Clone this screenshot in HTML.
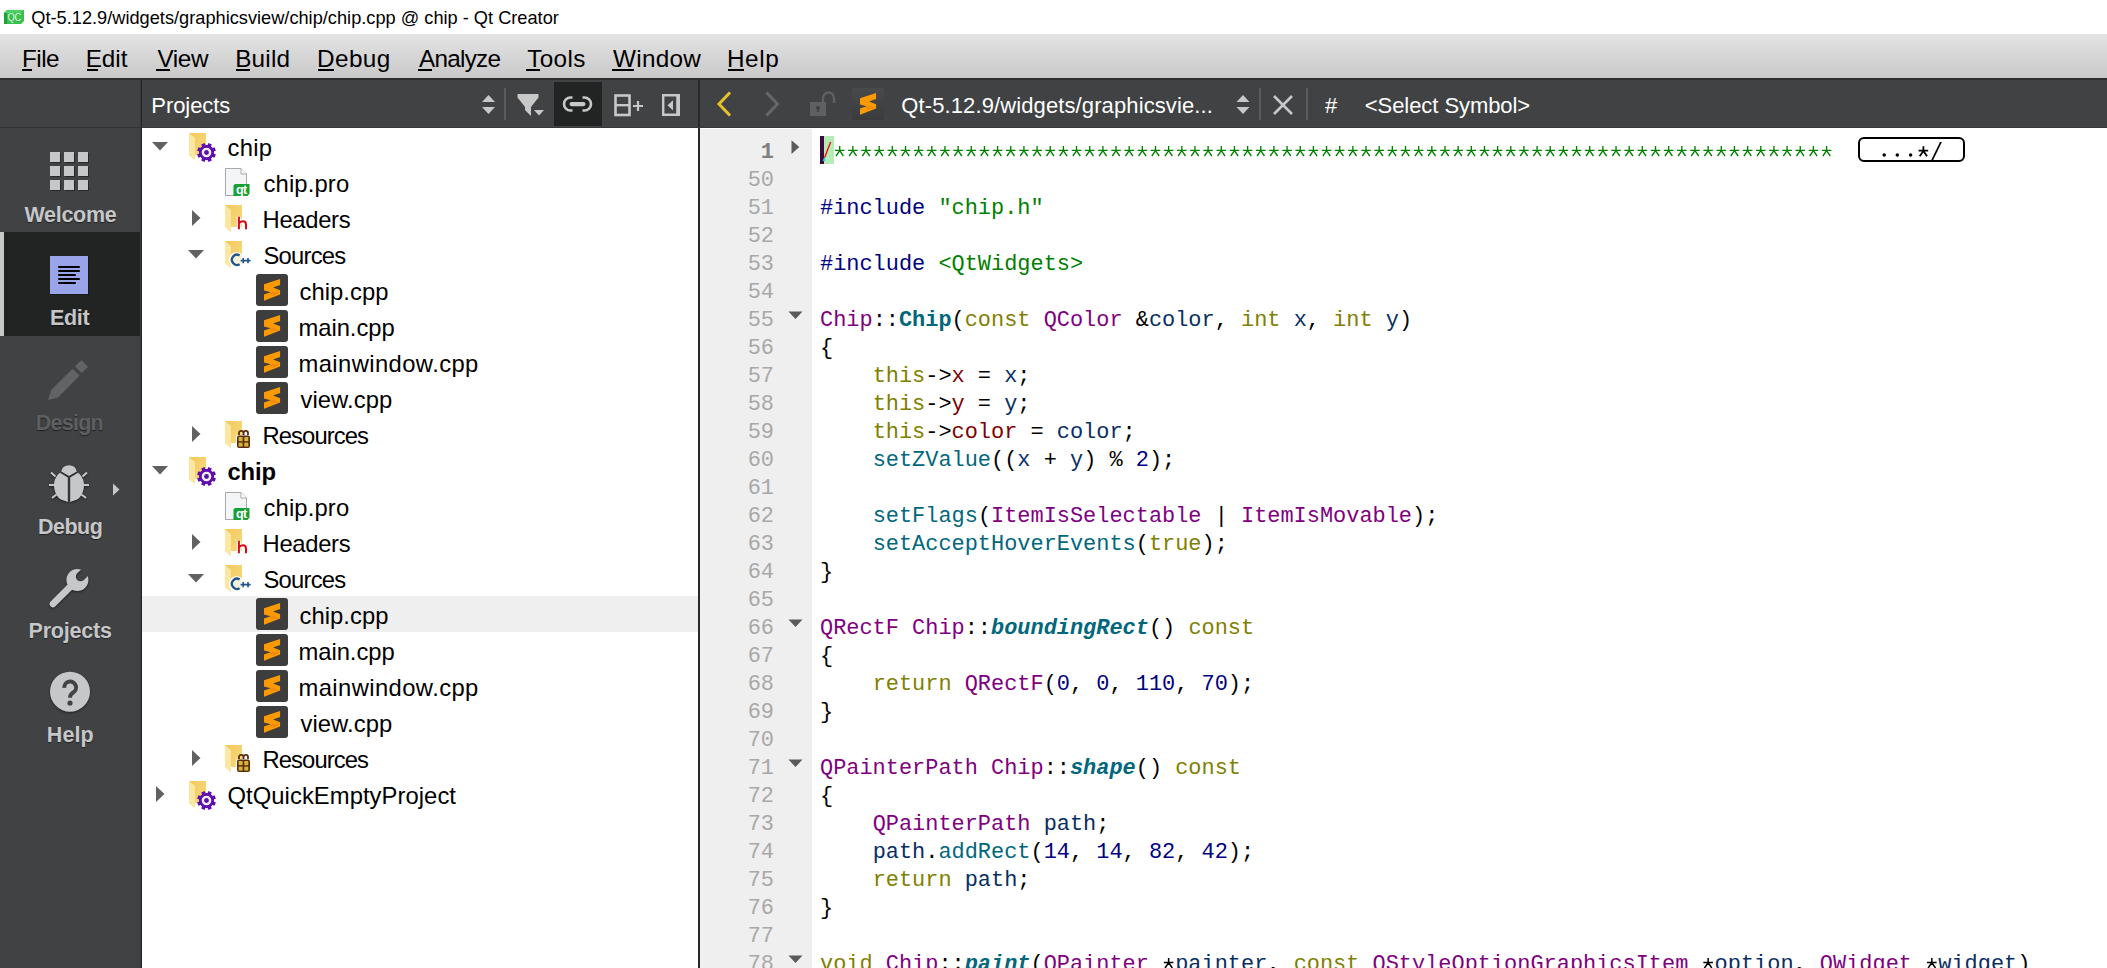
<!DOCTYPE html>
<html><head><meta charset="utf-8">
<style>
*{margin:0;padding:0;box-sizing:border-box}
html,body{width:2107px;height:968px;overflow:hidden;background:#fff;font-family:"Liberation Sans",sans-serif}
.a{position:absolute}
.t{position:absolute;white-space:pre;line-height:1}
svg{overflow:visible}
.sh{filter:drop-shadow(0.5px 1px 0.8px rgba(0,0,0,.55))}
</style></head>
<body>

<div class="a" style="left:0px;top:0px;width:2107px;height:34px;background:#fff;"></div>
<div class="a" style="left:0px;top:34px;width:2107px;height:44px;background:linear-gradient(#e3e3e3,#c9c9c9);"></div>
<div class="a" style="left:0px;top:78px;width:2107px;height:2px;background:#2d2e30;"></div>
<div class="a" style="left:0px;top:80px;width:2107px;height:48px;background:#404244;"></div>
<div class="a" style="left:0px;top:128px;width:140px;height:840px;background:#404244;"></div>
<div class="a" style="left:140px;top:128px;width:1px;height:840px;background:#37393b;"></div>
<div class="a" style="left:141px;top:128px;width:1px;height:840px;background:#232527;"></div>
<div class="a" style="left:142px;top:128px;width:556px;height:840px;background:#fff;"></div>
<div class="a" style="left:700px;top:129px;width:112px;height:839px;background:#efefef;"></div>
<div class="a" style="left:812px;top:128px;width:1295px;height:840px;background:#fff;"></div>
<div class="a" style="left:698px;top:80px;width:2px;height:888px;background:#29292a;"></div>
<div class="a" style="left:140px;top:80px;width:1px;height:48px;background:#37393b;"></div>
<div class="a" style="left:141px;top:80px;width:1px;height:48px;background:#232527;"></div>
<div class="a" style="left:0px;top:127px;width:140px;height:1px;background:#323234;"></div>
<div class="a" style="left:142px;top:127px;width:1965px;height:1px;background:#38393b;"></div>
<svg class="a " style="left:4px;top:10px" width="20" height="14" viewBox="0 0 20 14"><path d="M3 0H20V11L17 14H0V3Z" fill="#34c24a"/><path d="M0 3H3V14H0Z" fill="#22a236"/><path d="M0 3L3 0H20L17 3Z" fill="#4bd160"/><text x="12.8" y="11.4" font-family="Liberation Sans" font-size="11.6" fill="#e4f7e6" text-anchor="middle" transform="scale(0.8 1)" letter-spacing="-0.3">QC</text></svg>
<div class="t" style="left:31.299999999999997px;top:9.03px;font-size:18.2px;color:#000;font-weight:normal;font-style:normal;font-family:'Liberation Sans';letter-spacing:0.01px;">Qt-5.12.9/widgets/graphicsview/chip/chip.cpp @ chip - Qt Creator</div>
<div class="t" style="left:21.9px;top:47.25px;font-size:24.3px;color:#000;font-weight:normal;font-style:normal;font-family:'Liberation Sans';letter-spacing:-0.5px;">File</div>
<div class="t" style="left:85.7px;top:47.25px;font-size:24.3px;color:#000;font-weight:normal;font-style:normal;font-family:'Liberation Sans';letter-spacing:-0.033px;">Edit</div>
<div class="t" style="left:157.5px;top:47.25px;font-size:24.3px;color:#000;font-weight:normal;font-style:normal;font-family:'Liberation Sans';letter-spacing:-0.4px;">View</div>
<div class="t" style="left:235.2px;top:47.25px;font-size:24.3px;color:#000;font-weight:normal;font-style:normal;font-family:'Liberation Sans';letter-spacing:0.2px;">Build</div>
<div class="t" style="left:317px;top:47.25px;font-size:24.3px;color:#000;font-weight:normal;font-style:normal;font-family:'Liberation Sans';letter-spacing:0.425px;">Debug</div>
<div class="t" style="left:419px;top:47.25px;font-size:24.3px;color:#000;font-weight:normal;font-style:normal;font-family:'Liberation Sans';letter-spacing:-0.733px;">Analyze</div>
<div class="t" style="left:527.2px;top:47.25px;font-size:24.3px;color:#000;font-weight:normal;font-style:normal;font-family:'Liberation Sans';letter-spacing:0.375px;">Tools</div>
<div class="t" style="left:613px;top:47.25px;font-size:24.3px;color:#000;font-weight:normal;font-style:normal;font-family:'Liberation Sans';letter-spacing:0.28px;">Window</div>
<div class="t" style="left:727px;top:47.25px;font-size:24.3px;color:#000;font-weight:normal;font-style:normal;font-family:'Liberation Sans';letter-spacing:0.567px;">Help</div>
<div class="a" style="left:22px;top:69px;width:10.2px;height:2px;background:#000;"></div>
<div class="a" style="left:86.5px;top:69px;width:11.2px;height:2px;background:#000;"></div>
<div class="a" style="left:156.3px;top:69px;width:13.5px;height:2px;background:#000;"></div>
<div class="a" style="left:236px;top:69px;width:14px;height:2px;background:#000;"></div>
<div class="a" style="left:318px;top:69px;width:16px;height:2px;background:#000;"></div>
<div class="a" style="left:418px;top:69px;width:14.3px;height:2px;background:#000;"></div>
<div class="a" style="left:526.2px;top:69px;width:14px;height:2px;background:#000;"></div>
<div class="a" style="left:612px;top:69px;width:22px;height:2px;background:#000;"></div>
<div class="a" style="left:728px;top:69px;width:16px;height:2px;background:#000;"></div>
<div class="t" style="left:151.3px;top:95.00px;font-size:22.0px;color:#fff;font-weight:normal;font-style:normal;font-family:'Liberation Sans';letter-spacing:-0.071px;">Projects</div>
<svg class="a " style="left:481px;top:94px" width="15" height="21" viewBox="0 0 15 21"><path d="M7.5 1L14 8H1Z" fill="#c8c8c8"/><path d="M1 13H14L7.5 20Z" fill="#c8c8c8"/></svg>
<div class="a" style="left:504px;top:88px;width:2px;height:32px;background:#5b5c5e;"></div>
<svg class="a " style="left:517px;top:94px" width="28" height="23" viewBox="0 0 28 23"><path d="M0.5 0H21.5V3.5L14 13V22L8 16V13L0.5 3.5Z" fill="#c8c8c8"/><path d="M17 16H27L22 21.5Z" fill="#c8c8c8"/></svg>
<div class="a" style="left:554px;top:82px;width:48px;height:44px;background:#222424;"></div>
<svg class="a " style="left:563px;top:95px" width="30" height="18" viewBox="0 0 30 18"><path d="M9.5 2.5H7.5A6.5 6.5 0 0 0 7.5 15.5H9.5M19.5 2.5H21.5A6.5 6.5 0 0 1 21.5 15.5H19.5" stroke="#c8c8c8" stroke-width="2.6" fill="none"/><rect x="6.5" y="7" width="16" height="4.2" rx="2.1" fill="#c8c8c8"/></svg>
<svg class="a " style="left:614px;top:94px" width="30" height="23" viewBox="0 0 30 23"><rect x="1.5" y="1.5" width="14" height="19.5" stroke="#c8c8c8" stroke-width="2.6" fill="none"/><path d="M1.5 11.2H15.5" stroke="#c8c8c8" stroke-width="2.4"/><path d="M19 12H29M24 7V17" stroke="#c8c8c8" stroke-width="2.2"/></svg>
<svg class="a " style="left:662px;top:94px" width="20" height="23" viewBox="0 0 20 23"><path d="M0 0H18V22H0Z M2.4 2.4V19.6H14.2V2.4Z" fill="#c8c8c8" fill-rule="evenodd"/><path d="M11 6.2V16.5L5.5 11.3Z" fill="#c8c8c8"/></svg>
<svg class="a " style="left:716px;top:91px" width="17" height="27" viewBox="0 0 17 27"><path d="M14 1.5L3 13L14 24.5" stroke="#e6c228" stroke-width="3" fill="none"/></svg>
<svg class="a " style="left:764px;top:91px" width="17" height="27" viewBox="0 0 17 27"><path d="M2.5 1.5L13.5 13L2.5 24.5" stroke="#666769" stroke-width="3" fill="none"/></svg>
<svg class="a " style="left:809px;top:91px" width="27" height="26" viewBox="0 0 27 26"><rect x="1" y="11" width="16" height="14" fill="#5f6062"/><path d="M14 11.5V7A5.5 5.5 0 0 1 25 7V12" stroke="#5f6062" stroke-width="2.4" fill="none"/><circle cx="9" cy="17" r="2" fill="#404244"/><rect x="8" y="17" width="2" height="4" fill="#404244"/></svg>
<div class="a" style="left:852px;top:88px;width:32px;height:32px;background:linear-gradient(#484a4b,#3a3b3c);border-radius:3px"></div>
<svg class="a " style="left:852px;top:88px" width="32" height="32" viewBox="0 0 32 32"><path d="M8 10.3L24.1 5.1V11L17 13.6L24.1 16.2V20.4L8 26.8V20.4L14.6 18.2L8 16.6Z" fill="#fd9a02"/><path d="M12.5 19.2L17.5 17.4L22.5 19.8L17 21.8Z" fill="#e08508" opacity="0.55"/></svg>
<div class="t" style="left:901.3px;top:95.00px;font-size:22.0px;color:#fff;font-weight:normal;font-style:normal;font-family:'Liberation Sans';letter-spacing:0.11px;">Qt-5.12.9/widgets/graphicsvie...</div>
<svg class="a " style="left:1236px;top:94px" width="14" height="21" viewBox="0 0 14 21"><path d="M7 1L13.5 8H0.5Z" fill="#c8c8c8"/><path d="M0.5 13H13.5L7 20Z" fill="#c8c8c8"/></svg>
<div class="a" style="left:1259px;top:88px;width:2px;height:32px;background:#5b5c5e;"></div>
<svg class="a " style="left:1272px;top:94px" width="22" height="22" viewBox="0 0 22 22"><path d="M2 2L20 20M20 2L2 20" stroke="#c8c8c8" stroke-width="2.6"/></svg>
<div class="a" style="left:1306px;top:88px;width:2px;height:32px;background:#5b5c5e;"></div>
<div class="t" style="left:1325px;top:95.00px;font-size:22.0px;color:#fff;font-weight:normal;font-style:normal;font-family:'Liberation Sans';">#</div>
<div class="t" style="left:1364.8px;top:95.00px;font-size:22.0px;color:#fff;font-weight:normal;font-style:normal;font-family:'Liberation Sans';letter-spacing:-0.064px;">&lt;Select Symbol&gt;</div>
<div class="a" style="left:0px;top:232px;width:140px;height:104px;background:#222424;"></div>
<div class="a" style="left:0px;top:232px;width:4px;height:104px;background:#c8c8c8;"></div>
<svg class="a " style="left:50px;top:152px" width="40" height="40" viewBox="0 0 40 40"><rect x="1" y="1" width="10" height="10" fill="#1e1e1e" opacity="0.7"/><rect x="0" y="0" width="10" height="10" fill="#c6c7c9"/><rect x="1" y="15" width="10" height="10" fill="#1e1e1e" opacity="0.7"/><rect x="0" y="14" width="10" height="10" fill="#c6c7c9"/><rect x="1" y="29" width="10" height="10" fill="#1e1e1e" opacity="0.7"/><rect x="0" y="28" width="10" height="10" fill="#c6c7c9"/><rect x="15" y="1" width="10" height="10" fill="#1e1e1e" opacity="0.7"/><rect x="14" y="0" width="10" height="10" fill="#c6c7c9"/><rect x="15" y="15" width="10" height="10" fill="#1e1e1e" opacity="0.7"/><rect x="14" y="14" width="10" height="10" fill="#c6c7c9"/><rect x="15" y="29" width="10" height="10" fill="#1e1e1e" opacity="0.7"/><rect x="14" y="28" width="10" height="10" fill="#c6c7c9"/><rect x="29" y="1" width="10" height="10" fill="#1e1e1e" opacity="0.7"/><rect x="28" y="0" width="10" height="10" fill="#c6c7c9"/><rect x="29" y="15" width="10" height="10" fill="#1e1e1e" opacity="0.7"/><rect x="28" y="14" width="10" height="10" fill="#c6c7c9"/><rect x="29" y="29" width="10" height="10" fill="#1e1e1e" opacity="0.7"/><rect x="28" y="28" width="10" height="10" fill="#c6c7c9"/></svg>
<svg class="a " style="left:50px;top:256px" width="40" height="40" viewBox="0 0 40 40"><rect x="1" y="1" width="38" height="38" fill="#111" opacity="0.6"/><rect x="0" y="0" width="38" height="38" fill="#9aa5e9"/><rect x="8" y="10" width="22" height="2" rx="1" fill="#000"/><rect x="8" y="14" width="22" height="2" rx="1" fill="#000"/><rect x="8" y="18" width="18" height="2" rx="1" fill="#000"/><rect x="8" y="22" width="22" height="2" rx="1" fill="#000"/><rect x="8" y="26" width="18" height="2" rx="1" fill="#000"/></svg>
<svg class="a " style="left:46px;top:358px" width="44" height="44" viewBox="0 0 44 44"><path d="M2 42L5.2 32L26.5 10.7L33.7 17.6L12 39.6Z" fill="#626364"/><path d="M29 8.6L35.4 2L42 8.9L35.6 15Z" fill="#626364"/></svg>
<svg class="a sh" style="left:48px;top:462px" width="44" height="42" viewBox="0 0 44 42"><g fill="#c6c7c9" stroke="none">
<path d="M13.2 9.5A8 8 0 0 1 28.8 9.5L21 14Z"/>
<path d="M19.8 15.5L12 10.8C8.5 13.5 6 18 6 23C6 30 9.5 36 13 37.5L19.8 40Z"/>
<path d="M22.2 15.5L30 10.8C33.5 13.5 36 18 36 23C36 30 32.5 36 29 37.5L22.2 40Z"/>
</g>
<path d="M3 10.5L7.5 14.5M39 10.5L34.5 14.5M1 23H6M41 23H36M4 36L8.5 32.5M38 36L33.5 32.5" stroke="#c6c7c9" stroke-width="2"/></svg>
<svg class="a " style="left:112px;top:483px" width="8" height="13" viewBox="0 0 8 13"><path d="M1 0.5L7.5 6.5L1 12.5Z" fill="#c6c7c9"/></svg>
<svg class="a sh" style="left:44px;top:562px" width="50" height="50" viewBox="0 0 50 50"><defs><mask id="wm" maskUnits="userSpaceOnUse" x="0" y="0" width="50" height="50"><rect width="50" height="50" fill="#fff"/><g transform="translate(33.6 17.6) rotate(-45)"><rect x="-0.5" y="-4.7" width="17" height="9.4" rx="4.7" fill="#000"/></g></mask></defs><g mask="url(#wm)"><path d="M9 41.8L27 24" stroke="#c6c7c9" stroke-width="6.8" stroke-linecap="round"/><circle cx="33.4" cy="18" r="11" fill="#c6c7c9"/></g></svg>
<svg class="a sh" style="left:49px;top:671px" width="42" height="42" viewBox="0 0 42 42"><circle cx="21" cy="20.7" r="20" fill="#c6c7c9"/><path d="M15.3 16.8A5.9 5.9 0 1 1 24.2 21.5C21.8 23 21 24 21 26.8" stroke="#404244" stroke-width="3.9" fill="none"/><circle cx="21" cy="32" r="2.6" fill="#404244"/></svg>
<div class="t" style="left:24.5px;top:204.82px;font-size:21.5px;color:#c6c7c9;font-weight:bold;font-style:normal;font-family:'Liberation Sans';text-shadow:0 1px 1px rgba(0,0,0,.5);letter-spacing:-0.3px;">Welcome</div>
<div class="t" style="left:50px;top:308.33px;font-size:21.5px;color:#c6c7c9;font-weight:bold;font-style:normal;font-family:'Liberation Sans';text-shadow:0 1px 1px rgba(0,0,0,.5);letter-spacing:-0.333px;">Edit</div>
<div class="t" style="left:35.8px;top:413.03px;font-size:21.5px;color:#5e5f61;font-weight:bold;font-style:normal;font-family:'Liberation Sans';text-shadow:0 1px 1px rgba(0,0,0,.5);letter-spacing:-0.76px;">Design</div>
<div class="t" style="left:38px;top:517.02px;font-size:21.5px;color:#c6c7c9;font-weight:bold;font-style:normal;font-family:'Liberation Sans';text-shadow:0 1px 1px rgba(0,0,0,.5);letter-spacing:-0.5px;">Debug</div>
<div class="t" style="left:28.6px;top:620.73px;font-size:21.5px;color:#c6c7c9;font-weight:bold;font-style:normal;font-family:'Liberation Sans';text-shadow:0 1px 1px rgba(0,0,0,.5);letter-spacing:-0.229px;">Projects</div>
<div class="t" style="left:46.8px;top:724.73px;font-size:21.5px;color:#c6c7c9;font-weight:bold;font-style:normal;font-family:'Liberation Sans';text-shadow:0 1px 1px rgba(0,0,0,.5);letter-spacing:0.067px;">Help</div>
<div class="a" style="left:142px;top:596px;width:556px;height:36px;background:#efefef;"></div>
<svg class="a " style="left:152px;top:141.6px" width="16" height="9" viewBox="0 0 16 9"><path d="M0 0H16L8 8.5Z" fill="#616161"/></svg>
<svg class="a " style="left:189px;top:133px" width="17" height="27" viewBox="0 0 17 27"><defs><linearGradient id="fg" x1="0" y1="0" x2="1" y2="1"><stop offset="0" stop-color="#f0c85a"/><stop offset="1" stop-color="#fbdc85"/></linearGradient></defs><path d="M0 0H17V22H6V27L0 22Z" fill="url(#fg)"/><path d="M0 0L6 5V27L0 22Z" fill="#fde6a2"/></svg>
<svg class="a " style="left:195.8px;top:142.1px" width="21" height="21" viewBox="0 0 21 21"><g transform="translate(10.5 10.5)"><path d="M6.95 0.86 L9.40 1.93 L8.02 5.28 L5.52 4.31 L4.31 5.52 L5.28 8.02 L1.93 9.40 L0.86 6.95 L-0.86 6.95 L-1.93 9.40 L-5.28 8.02 L-4.31 5.52 L-5.52 4.31 L-8.02 5.28 L-9.40 1.93 L-6.95 0.86 L-6.95 -0.86 L-9.40 -1.93 L-8.02 -5.28 L-5.52 -4.31 L-4.31 -5.52 L-5.28 -8.02 L-1.93 -9.40 L-0.86 -6.95 L0.86 -6.95 L1.93 -9.40 L5.28 -8.02 L4.31 -5.52 L5.52 -4.31 L8.02 -5.28 L9.40 -1.93 L6.95 -0.86Z" fill="#5f0cb0"/><circle r="7.5" fill="#5f0cb0"/><circle r="4.8" fill="#eef2ea"/><circle r="2.4" fill="#5f0cb0"/></g></svg>
<div class="t" style="left:227.5px;top:135.57px;font-size:23.8px;color:#000;font-weight:normal;font-style:normal;font-family:'Liberation Sans';letter-spacing:0.3px;">chip</div>
<svg class="a " style="left:225px;top:168px" width="25" height="28" viewBox="0 0 25 28"><path d="M0.5 0.5H16L21.5 6V27.5H0.5Z" fill="#f4f5f7" stroke="#a8a8a8" stroke-width="1"/><path d="M16 0.5V6H21.5" fill="#fff" stroke="#a8a8a8" stroke-width="1"/><path d="M10 16H24.5V25.5L22.5 28H8.5V17.5Z" fill="#17a035"/><text x="16.3" y="25.6" font-family="Liberation Sans" font-weight="bold" font-size="12.5" fill="#fff" text-anchor="middle" letter-spacing="-0.5">qt</text></svg>
<div class="t" style="left:263.5px;top:171.57px;font-size:23.8px;color:#000;font-weight:normal;font-style:normal;font-family:'Liberation Sans';letter-spacing:0.143px;">chip.pro</div>
<svg class="a " style="left:192px;top:209.8px" width="9" height="16" viewBox="0 0 9 16"><path d="M0 0V16L8.5 8Z" fill="#616161"/></svg>
<svg class="a " style="left:225px;top:205px" width="17" height="27" viewBox="0 0 17 27"><defs><linearGradient id="fg" x1="0" y1="0" x2="1" y2="1"><stop offset="0" stop-color="#f0c85a"/><stop offset="1" stop-color="#fbdc85"/></linearGradient></defs><path d="M0 0H17V22H6V27L0 22Z" fill="url(#fg)"/><path d="M0 0L6 5V27L0 22Z" fill="#fde6a2"/></svg>
<svg class="a " style="left:225px;top:205px" width="26" height="28" viewBox="0 0 26 28"><path d="M13.9 11.8V24.2M13.9 18.5C15 16.8 16.4 16.3 17.8 16.3C19.9 16.3 21 17.6 21 19.7V24.2" stroke="#fff" stroke-width="4" fill="none" stroke-linejoin="round"/><path d="M13.9 11.8V24.2M13.9 18.5C15 16.8 16.4 16.3 17.8 16.3C19.9 16.3 21 17.6 21 19.7V24.2" stroke="#d80c16" stroke-width="2" fill="none"/></svg>
<div class="t" style="left:262.5px;top:207.57px;font-size:23.8px;color:#000;font-weight:normal;font-style:normal;font-family:'Liberation Sans';letter-spacing:-0.3px;">Headers</div>
<svg class="a " style="left:188px;top:249.6px" width="16" height="9" viewBox="0 0 16 9"><path d="M0 0H16L8 8.5Z" fill="#616161"/></svg>
<svg class="a " style="left:225px;top:241px" width="17" height="27" viewBox="0 0 17 27"><defs><linearGradient id="fg" x1="0" y1="0" x2="1" y2="1"><stop offset="0" stop-color="#f0c85a"/><stop offset="1" stop-color="#fbdc85"/></linearGradient></defs><path d="M0 0H17V22H6V27L0 22Z" fill="url(#fg)"/><path d="M0 0L6 5V27L0 22Z" fill="#fde6a2"/></svg>
<svg class="a " style="left:225px;top:241px" width="28" height="28" viewBox="0 0 28 28"><circle cx="11.6" cy="18.8" r="7.6" fill="#fff"/><circle cx="11.6" cy="18.8" r="6.3" fill="#f8f0dd"/><path d="M14.6 14.4A5.1 5.1 0 1 0 14.6 23.2" stroke="#1f5687" stroke-width="2.3" fill="none"/><path d="M15.6 19.6H20.8M18.2 17V22.2M20.4 19.6H25.6M23 17V22.2" stroke="#fff" stroke-width="3.2"/><path d="M15.6 19.6H20.8M18.2 17V22.2M20.4 19.6H25.6M23 17V22.2" stroke="#1f5687" stroke-width="1.6"/></svg>
<div class="t" style="left:263.5px;top:243.57px;font-size:23.8px;color:#000;font-weight:normal;font-style:normal;font-family:'Liberation Sans';letter-spacing:-0.783px;">Sources</div>
<div class="a" style="left:256px;top:274px;width:32px;height:32px;background:#3d3d3d;border-radius:3px"></div>
<svg class="a " style="left:256px;top:274px" width="32" height="32" viewBox="0 0 32 32"><path d="M8 10.3L24.1 5.1V11L17 13.6L24.1 16.2V20.4L8 26.8V20.4L14.6 18.2L8 16.6Z" fill="#fd9a02"/><path d="M12.5 19.2L17.5 17.4L22.5 19.8L17 21.8Z" fill="#e08508" opacity="0.55"/></svg>
<div class="t" style="left:299.5px;top:279.57px;font-size:23.8px;color:#000;font-weight:normal;font-style:normal;font-family:'Liberation Sans';letter-spacing:0.043px;">chip.cpp</div>
<div class="a" style="left:256px;top:310px;width:32px;height:32px;background:#3d3d3d;border-radius:3px"></div>
<svg class="a " style="left:256px;top:310px" width="32" height="32" viewBox="0 0 32 32"><path d="M8 10.3L24.1 5.1V11L17 13.6L24.1 16.2V20.4L8 26.8V20.4L14.6 18.2L8 16.6Z" fill="#fd9a02"/><path d="M12.5 19.2L17.5 17.4L22.5 19.8L17 21.8Z" fill="#e08508" opacity="0.55"/></svg>
<div class="t" style="left:298.5px;top:315.57px;font-size:23.8px;color:#000;font-weight:normal;font-style:normal;font-family:'Liberation Sans';letter-spacing:-0.057px;">main.cpp</div>
<div class="a" style="left:256px;top:346px;width:32px;height:32px;background:#3d3d3d;border-radius:3px"></div>
<svg class="a " style="left:256px;top:346px" width="32" height="32" viewBox="0 0 32 32"><path d="M8 10.3L24.1 5.1V11L17 13.6L24.1 16.2V20.4L8 26.8V20.4L14.6 18.2L8 16.6Z" fill="#fd9a02"/><path d="M12.5 19.2L17.5 17.4L22.5 19.8L17 21.8Z" fill="#e08508" opacity="0.55"/></svg>
<div class="t" style="left:298.5px;top:351.57px;font-size:23.8px;color:#000;font-weight:normal;font-style:normal;font-family:'Liberation Sans';letter-spacing:0.4px;">mainwindow.cpp</div>
<div class="a" style="left:256px;top:382px;width:32px;height:32px;background:#3d3d3d;border-radius:3px"></div>
<svg class="a " style="left:256px;top:382px" width="32" height="32" viewBox="0 0 32 32"><path d="M8 10.3L24.1 5.1V11L17 13.6L24.1 16.2V20.4L8 26.8V20.4L14.6 18.2L8 16.6Z" fill="#fd9a02"/><path d="M12.5 19.2L17.5 17.4L22.5 19.8L17 21.8Z" fill="#e08508" opacity="0.55"/></svg>
<div class="t" style="left:300.5px;top:387.57px;font-size:23.8px;color:#000;font-weight:normal;font-style:normal;font-family:'Liberation Sans';letter-spacing:0.057px;">view.cpp</div>
<svg class="a " style="left:192px;top:425.8px" width="9" height="16" viewBox="0 0 9 16"><path d="M0 0V16L8.5 8Z" fill="#616161"/></svg>
<svg class="a " style="left:225px;top:421px" width="17" height="27" viewBox="0 0 17 27"><defs><linearGradient id="fg" x1="0" y1="0" x2="1" y2="1"><stop offset="0" stop-color="#f0c85a"/><stop offset="1" stop-color="#fbdc85"/></linearGradient></defs><path d="M0 0H17V22H6V27L0 22Z" fill="url(#fg)"/><path d="M0 0L6 5V27L0 22Z" fill="#fde6a2"/></svg>
<svg class="a " style="left:236px;top:430px" width="15" height="19" viewBox="0 0 15 19"><path d="M0 5.5H15V19H0Z" fill="#fff"/><path d="M3 5V3A2.2 2.2 0 0 1 7.4 3V5M7.6 5V3A2.2 2.2 0 0 1 12 3V5" stroke="#5b2c0c" stroke-width="1.8" fill="none"/><rect x="1" y="5.5" width="13" height="12.5" rx="2" fill="#5b2c0c"/><rect x="2.6" y="7" width="4" height="4.2" fill="#d2b53a"/><rect x="8.3" y="7" width="4" height="4.2" fill="#d2b53a"/><rect x="2.6" y="12.6" width="4" height="4" fill="#d2b53a"/><rect x="8.3" y="12.6" width="4" height="4" fill="#d2b53a"/></svg>
<div class="t" style="left:262.5px;top:423.57px;font-size:23.8px;color:#000;font-weight:normal;font-style:normal;font-family:'Liberation Sans';letter-spacing:-0.912px;">Resources</div>
<svg class="a " style="left:152px;top:465.6px" width="16" height="9" viewBox="0 0 16 9"><path d="M0 0H16L8 8.5Z" fill="#616161"/></svg>
<svg class="a " style="left:189px;top:457px" width="17" height="27" viewBox="0 0 17 27"><defs><linearGradient id="fg" x1="0" y1="0" x2="1" y2="1"><stop offset="0" stop-color="#f0c85a"/><stop offset="1" stop-color="#fbdc85"/></linearGradient></defs><path d="M0 0H17V22H6V27L0 22Z" fill="url(#fg)"/><path d="M0 0L6 5V27L0 22Z" fill="#fde6a2"/></svg>
<svg class="a " style="left:195.8px;top:466.1px" width="21" height="21" viewBox="0 0 21 21"><g transform="translate(10.5 10.5)"><path d="M6.95 0.86 L9.40 1.93 L8.02 5.28 L5.52 4.31 L4.31 5.52 L5.28 8.02 L1.93 9.40 L0.86 6.95 L-0.86 6.95 L-1.93 9.40 L-5.28 8.02 L-4.31 5.52 L-5.52 4.31 L-8.02 5.28 L-9.40 1.93 L-6.95 0.86 L-6.95 -0.86 L-9.40 -1.93 L-8.02 -5.28 L-5.52 -4.31 L-4.31 -5.52 L-5.28 -8.02 L-1.93 -9.40 L-0.86 -6.95 L0.86 -6.95 L1.93 -9.40 L5.28 -8.02 L4.31 -5.52 L5.52 -4.31 L8.02 -5.28 L9.40 -1.93 L6.95 -0.86Z" fill="#5f0cb0"/><circle r="7.5" fill="#5f0cb0"/><circle r="4.8" fill="#eef2ea"/><circle r="2.4" fill="#5f0cb0"/></g></svg>
<div class="t" style="left:227.5px;top:459.57px;font-size:23.8px;color:#000;font-weight:bold;font-style:normal;font-family:'Liberation Sans';letter-spacing:-0.167px;">chip</div>
<svg class="a " style="left:225px;top:492px" width="25" height="28" viewBox="0 0 25 28"><path d="M0.5 0.5H16L21.5 6V27.5H0.5Z" fill="#f4f5f7" stroke="#a8a8a8" stroke-width="1"/><path d="M16 0.5V6H21.5" fill="#fff" stroke="#a8a8a8" stroke-width="1"/><path d="M10 16H24.5V25.5L22.5 28H8.5V17.5Z" fill="#17a035"/><text x="16.3" y="25.6" font-family="Liberation Sans" font-weight="bold" font-size="12.5" fill="#fff" text-anchor="middle" letter-spacing="-0.5">qt</text></svg>
<div class="t" style="left:263.5px;top:495.57px;font-size:23.8px;color:#000;font-weight:normal;font-style:normal;font-family:'Liberation Sans';letter-spacing:0.143px;">chip.pro</div>
<svg class="a " style="left:192px;top:533.8px" width="9" height="16" viewBox="0 0 9 16"><path d="M0 0V16L8.5 8Z" fill="#616161"/></svg>
<svg class="a " style="left:225px;top:529px" width="17" height="27" viewBox="0 0 17 27"><defs><linearGradient id="fg" x1="0" y1="0" x2="1" y2="1"><stop offset="0" stop-color="#f0c85a"/><stop offset="1" stop-color="#fbdc85"/></linearGradient></defs><path d="M0 0H17V22H6V27L0 22Z" fill="url(#fg)"/><path d="M0 0L6 5V27L0 22Z" fill="#fde6a2"/></svg>
<svg class="a " style="left:225px;top:529px" width="26" height="28" viewBox="0 0 26 28"><path d="M13.9 11.8V24.2M13.9 18.5C15 16.8 16.4 16.3 17.8 16.3C19.9 16.3 21 17.6 21 19.7V24.2" stroke="#fff" stroke-width="4" fill="none" stroke-linejoin="round"/><path d="M13.9 11.8V24.2M13.9 18.5C15 16.8 16.4 16.3 17.8 16.3C19.9 16.3 21 17.6 21 19.7V24.2" stroke="#d80c16" stroke-width="2" fill="none"/></svg>
<div class="t" style="left:262.5px;top:531.57px;font-size:23.8px;color:#000;font-weight:normal;font-style:normal;font-family:'Liberation Sans';letter-spacing:-0.3px;">Headers</div>
<svg class="a " style="left:188px;top:573.6px" width="16" height="9" viewBox="0 0 16 9"><path d="M0 0H16L8 8.5Z" fill="#616161"/></svg>
<svg class="a " style="left:225px;top:565px" width="17" height="27" viewBox="0 0 17 27"><defs><linearGradient id="fg" x1="0" y1="0" x2="1" y2="1"><stop offset="0" stop-color="#f0c85a"/><stop offset="1" stop-color="#fbdc85"/></linearGradient></defs><path d="M0 0H17V22H6V27L0 22Z" fill="url(#fg)"/><path d="M0 0L6 5V27L0 22Z" fill="#fde6a2"/></svg>
<svg class="a " style="left:225px;top:565px" width="28" height="28" viewBox="0 0 28 28"><circle cx="11.6" cy="18.8" r="7.6" fill="#fff"/><circle cx="11.6" cy="18.8" r="6.3" fill="#f8f0dd"/><path d="M14.6 14.4A5.1 5.1 0 1 0 14.6 23.2" stroke="#1f5687" stroke-width="2.3" fill="none"/><path d="M15.6 19.6H20.8M18.2 17V22.2M20.4 19.6H25.6M23 17V22.2" stroke="#fff" stroke-width="3.2"/><path d="M15.6 19.6H20.8M18.2 17V22.2M20.4 19.6H25.6M23 17V22.2" stroke="#1f5687" stroke-width="1.6"/></svg>
<div class="t" style="left:263.5px;top:567.57px;font-size:23.8px;color:#000;font-weight:normal;font-style:normal;font-family:'Liberation Sans';letter-spacing:-0.783px;">Sources</div>
<div class="a" style="left:256px;top:598px;width:32px;height:32px;background:#3d3d3d;border-radius:3px"></div>
<svg class="a " style="left:256px;top:598px" width="32" height="32" viewBox="0 0 32 32"><path d="M8 10.3L24.1 5.1V11L17 13.6L24.1 16.2V20.4L8 26.8V20.4L14.6 18.2L8 16.6Z" fill="#fd9a02"/><path d="M12.5 19.2L17.5 17.4L22.5 19.8L17 21.8Z" fill="#e08508" opacity="0.55"/></svg>
<div class="t" style="left:299.5px;top:603.57px;font-size:23.8px;color:#000;font-weight:normal;font-style:normal;font-family:'Liberation Sans';letter-spacing:0.043px;">chip.cpp</div>
<div class="a" style="left:256px;top:634px;width:32px;height:32px;background:#3d3d3d;border-radius:3px"></div>
<svg class="a " style="left:256px;top:634px" width="32" height="32" viewBox="0 0 32 32"><path d="M8 10.3L24.1 5.1V11L17 13.6L24.1 16.2V20.4L8 26.8V20.4L14.6 18.2L8 16.6Z" fill="#fd9a02"/><path d="M12.5 19.2L17.5 17.4L22.5 19.8L17 21.8Z" fill="#e08508" opacity="0.55"/></svg>
<div class="t" style="left:298.5px;top:639.57px;font-size:23.8px;color:#000;font-weight:normal;font-style:normal;font-family:'Liberation Sans';letter-spacing:-0.057px;">main.cpp</div>
<div class="a" style="left:256px;top:670px;width:32px;height:32px;background:#3d3d3d;border-radius:3px"></div>
<svg class="a " style="left:256px;top:670px" width="32" height="32" viewBox="0 0 32 32"><path d="M8 10.3L24.1 5.1V11L17 13.6L24.1 16.2V20.4L8 26.8V20.4L14.6 18.2L8 16.6Z" fill="#fd9a02"/><path d="M12.5 19.2L17.5 17.4L22.5 19.8L17 21.8Z" fill="#e08508" opacity="0.55"/></svg>
<div class="t" style="left:298.5px;top:675.57px;font-size:23.8px;color:#000;font-weight:normal;font-style:normal;font-family:'Liberation Sans';letter-spacing:0.4px;">mainwindow.cpp</div>
<div class="a" style="left:256px;top:706px;width:32px;height:32px;background:#3d3d3d;border-radius:3px"></div>
<svg class="a " style="left:256px;top:706px" width="32" height="32" viewBox="0 0 32 32"><path d="M8 10.3L24.1 5.1V11L17 13.6L24.1 16.2V20.4L8 26.8V20.4L14.6 18.2L8 16.6Z" fill="#fd9a02"/><path d="M12.5 19.2L17.5 17.4L22.5 19.8L17 21.8Z" fill="#e08508" opacity="0.55"/></svg>
<div class="t" style="left:300.5px;top:711.57px;font-size:23.8px;color:#000;font-weight:normal;font-style:normal;font-family:'Liberation Sans';letter-spacing:0.057px;">view.cpp</div>
<svg class="a " style="left:192px;top:749.8px" width="9" height="16" viewBox="0 0 9 16"><path d="M0 0V16L8.5 8Z" fill="#616161"/></svg>
<svg class="a " style="left:225px;top:745px" width="17" height="27" viewBox="0 0 17 27"><defs><linearGradient id="fg" x1="0" y1="0" x2="1" y2="1"><stop offset="0" stop-color="#f0c85a"/><stop offset="1" stop-color="#fbdc85"/></linearGradient></defs><path d="M0 0H17V22H6V27L0 22Z" fill="url(#fg)"/><path d="M0 0L6 5V27L0 22Z" fill="#fde6a2"/></svg>
<svg class="a " style="left:236px;top:754px" width="15" height="19" viewBox="0 0 15 19"><path d="M0 5.5H15V19H0Z" fill="#fff"/><path d="M3 5V3A2.2 2.2 0 0 1 7.4 3V5M7.6 5V3A2.2 2.2 0 0 1 12 3V5" stroke="#5b2c0c" stroke-width="1.8" fill="none"/><rect x="1" y="5.5" width="13" height="12.5" rx="2" fill="#5b2c0c"/><rect x="2.6" y="7" width="4" height="4.2" fill="#d2b53a"/><rect x="8.3" y="7" width="4" height="4.2" fill="#d2b53a"/><rect x="2.6" y="12.6" width="4" height="4" fill="#d2b53a"/><rect x="8.3" y="12.6" width="4" height="4" fill="#d2b53a"/></svg>
<div class="t" style="left:262.5px;top:747.57px;font-size:23.8px;color:#000;font-weight:normal;font-style:normal;font-family:'Liberation Sans';letter-spacing:-0.912px;">Resources</div>
<svg class="a " style="left:156px;top:785.8px" width="9" height="16" viewBox="0 0 9 16"><path d="M0 0V16L8.5 8Z" fill="#616161"/></svg>
<svg class="a " style="left:189px;top:781px" width="17" height="27" viewBox="0 0 17 27"><defs><linearGradient id="fg" x1="0" y1="0" x2="1" y2="1"><stop offset="0" stop-color="#f0c85a"/><stop offset="1" stop-color="#fbdc85"/></linearGradient></defs><path d="M0 0H17V22H6V27L0 22Z" fill="url(#fg)"/><path d="M0 0L6 5V27L0 22Z" fill="#fde6a2"/></svg>
<svg class="a " style="left:195.8px;top:790.1px" width="21" height="21" viewBox="0 0 21 21"><g transform="translate(10.5 10.5)"><path d="M6.95 0.86 L9.40 1.93 L8.02 5.28 L5.52 4.31 L4.31 5.52 L5.28 8.02 L1.93 9.40 L0.86 6.95 L-0.86 6.95 L-1.93 9.40 L-5.28 8.02 L-4.31 5.52 L-5.52 4.31 L-8.02 5.28 L-9.40 1.93 L-6.95 0.86 L-6.95 -0.86 L-9.40 -1.93 L-8.02 -5.28 L-5.52 -4.31 L-4.31 -5.52 L-5.28 -8.02 L-1.93 -9.40 L-0.86 -6.95 L0.86 -6.95 L1.93 -9.40 L5.28 -8.02 L4.31 -5.52 L5.52 -4.31 L8.02 -5.28 L9.40 -1.93 L6.95 -0.86Z" fill="#5f0cb0"/><circle r="7.5" fill="#5f0cb0"/><circle r="4.8" fill="#eef2ea"/><circle r="2.4" fill="#5f0cb0"/></g></svg>
<div class="t" style="left:227.5px;top:783.57px;font-size:23.8px;color:#000;font-weight:normal;font-style:normal;font-family:'Liberation Sans';letter-spacing:0.056px;">QtQuickEmptyProject</div>
<style>.c{position:absolute;white-space:pre;line-height:1;font-family:"Liberation Mono",monospace;font-size:21.93px;color:#000;left:820px}.k{color:#808000}.ty{color:#800080}.f{color:#00677c}.pp{color:#000080}.s{color:#008000}.n{color:#000080}.fd{color:#800000}.l{color:#092e64}.ln{position:absolute;white-space:pre;line-height:1;font-family:"Liberation Mono",monospace;font-size:21.93px;color:#a8a8a8;left:0;width:774px;text-align:right}</style>
<div class="ln" style="top:142.33px;font-weight:bold;color:#808080">1</div>
<div class="ln" style="top:170.33px">50</div>
<div class="ln" style="top:198.33px">51</div>
<div class="c" style="top:198.33px"><span class="pp">#include</span> <span class="s">"chip.h"</span></div>
<div class="ln" style="top:226.33px">52</div>
<div class="ln" style="top:254.33px">53</div>
<div class="c" style="top:254.33px"><span class="pp">#include</span> <span class="s">&lt;QtWidgets&gt;</span></div>
<div class="ln" style="top:282.33px">54</div>
<div class="ln" style="top:310.33px">55</div>
<div class="c" style="top:310.33px"><span class="ty">Chip</span>::<span class="f" style="font-weight:bold">Chip</span>(<span class="k">const</span> <span class="ty">QColor</span> &amp;<span class="l">color</span>, <span class="k">int</span> <span class="l">x</span>, <span class="k">int</span> <span class="l">y</span>)</div>
<div class="ln" style="top:338.33px">56</div>
<div class="c" style="top:338.33px">{</div>
<div class="ln" style="top:366.33px">57</div>
<div class="c" style="top:366.33px">    <span class="k">this</span>-&gt;<span class="fd">x</span> = <span class="l">x</span>;</div>
<div class="ln" style="top:394.33px">58</div>
<div class="c" style="top:394.33px">    <span class="k">this</span>-&gt;<span class="fd">y</span> = <span class="l">y</span>;</div>
<div class="ln" style="top:422.33px">59</div>
<div class="c" style="top:422.33px">    <span class="k">this</span>-&gt;<span class="fd">color</span> = <span class="l">color</span>;</div>
<div class="ln" style="top:450.33px">60</div>
<div class="c" style="top:450.33px">    <span class="f">setZValue</span>((<span class="l">x</span> + <span class="l">y</span>) % <span class="n">2</span>);</div>
<div class="ln" style="top:478.33px">61</div>
<div class="ln" style="top:506.33px">62</div>
<div class="c" style="top:506.33px">    <span class="f">setFlags</span>(<span class="ty">ItemIsSelectable</span> | <span class="ty">ItemIsMovable</span>);</div>
<div class="ln" style="top:534.33px">63</div>
<div class="c" style="top:534.33px">    <span class="f">setAcceptHoverEvents</span>(<span class="k">true</span>);</div>
<div class="ln" style="top:562.33px">64</div>
<div class="c" style="top:562.33px">}</div>
<div class="ln" style="top:590.33px">65</div>
<div class="ln" style="top:618.33px">66</div>
<div class="c" style="top:618.33px"><span class="ty">QRectF</span> <span class="ty">Chip</span>::<span class="f" style="font-weight:bold;font-style:italic">boundingRect</span>() <span class="k">const</span></div>
<div class="ln" style="top:646.33px">67</div>
<div class="c" style="top:646.33px">{</div>
<div class="ln" style="top:674.33px">68</div>
<div class="c" style="top:674.33px">    <span class="k">return</span> <span class="ty">QRectF</span>(<span class="n">0</span>, <span class="n">0</span>, <span class="n">110</span>, <span class="n">70</span>);</div>
<div class="ln" style="top:702.33px">69</div>
<div class="c" style="top:702.33px">}</div>
<div class="ln" style="top:730.33px">70</div>
<div class="ln" style="top:758.33px">71</div>
<div class="c" style="top:758.33px"><span class="ty">QPainterPath</span> <span class="ty">Chip</span>::<span class="f" style="font-weight:bold;font-style:italic">shape</span>() <span class="k">const</span></div>
<div class="ln" style="top:786.33px">72</div>
<div class="c" style="top:786.33px">{</div>
<div class="ln" style="top:814.33px">73</div>
<div class="c" style="top:814.33px">    <span class="ty">QPainterPath</span> <span class="l">path</span>;</div>
<div class="ln" style="top:842.33px">74</div>
<div class="c" style="top:842.33px">    <span class="l">path</span>.<span class="f">addRect</span>(<span class="n">14</span>, <span class="n">14</span>, <span class="n">82</span>, <span class="n">42</span>);</div>
<div class="ln" style="top:870.33px">75</div>
<div class="c" style="top:870.33px">    <span class="k">return</span> <span class="l">path</span>;</div>
<div class="ln" style="top:898.33px">76</div>
<div class="c" style="top:898.33px">}</div>
<div class="ln" style="top:926.33px">77</div>
<div class="ln" style="top:954.33px">78</div>
<div class="c" style="top:954.33px"><span class="k">void</span> <span class="ty">Chip</span>::<span class="f" style="font-weight:bold;font-style:italic">paint</span>(<span class="ty">QPainter</span>  <span class="l">painter</span>, <span class="k">const</span> <span class="ty">QStyleOptionGraphicsItem</span>  <span class="l">option</span>, <span class="ty">QWidget</span>  <span class="l">widget</span>)</div>
<div class="a" style="left:820px;top:136px;width:4px;height:28px;background:#3b0b3f;"></div>
<div class="a" style="left:824px;top:136px;width:10px;height:28px;background:#b5ecb5;"></div>
<svg class="a " style="left:822px;top:138px" width="12" height="24" viewBox="0 0 12 24"><path d="M8.6 4L1.9 21.5" stroke="#ff0000" stroke-width="1.35"/><path d="M0.6 23L2.6 18.3L3.3 23Z" fill="#00e0ff"/></svg>
<svg class="a" style="left:0;top:0" width="2107" height="968"><path d="M839.71 146.10V150.80M834.91 150.40H844.51M839.71 150.70L836.01 156.00M839.71 150.70L843.41 156.00M852.87 146.10V150.80M848.07 150.40H857.67M852.87 150.70L849.17 156.00M852.87 150.70L856.57 156.00M866.02 146.10V150.80M861.22 150.40H870.82M866.02 150.70L862.32 156.00M866.02 150.70L869.72 156.00M879.18 146.10V150.80M874.38 150.40H883.98M879.18 150.70L875.48 156.00M879.18 150.70L882.88 156.00M892.34 146.10V150.80M887.54 150.40H897.14M892.34 150.70L888.64 156.00M892.34 150.70L896.04 156.00M905.50 146.10V150.80M900.70 150.40H910.30M905.50 150.70L901.80 156.00M905.50 150.70L909.20 156.00M918.66 146.10V150.80M913.86 150.40H923.46M918.66 150.70L914.96 156.00M918.66 150.70L922.36 156.00M931.81 146.10V150.80M927.01 150.40H936.61M931.81 150.70L928.11 156.00M931.81 150.70L935.51 156.00M944.97 146.10V150.80M940.17 150.40H949.77M944.97 150.70L941.27 156.00M944.97 150.70L948.67 156.00M958.13 146.10V150.80M953.33 150.40H962.93M958.13 150.70L954.43 156.00M958.13 150.70L961.83 156.00M971.29 146.10V150.80M966.49 150.40H976.09M971.29 150.70L967.59 156.00M971.29 150.70L974.99 156.00M984.45 146.10V150.80M979.65 150.40H989.25M984.45 150.70L980.75 156.00M984.45 150.70L988.15 156.00M997.60 146.10V150.80M992.80 150.40H1002.40M997.60 150.70L993.90 156.00M997.60 150.70L1001.30 156.00M1010.76 146.10V150.80M1005.96 150.40H1015.56M1010.76 150.70L1007.06 156.00M1010.76 150.70L1014.46 156.00M1023.92 146.10V150.80M1019.12 150.40H1028.72M1023.92 150.70L1020.22 156.00M1023.92 150.70L1027.62 156.00M1037.08 146.10V150.80M1032.28 150.40H1041.88M1037.08 150.70L1033.38 156.00M1037.08 150.70L1040.78 156.00M1050.24 146.10V150.80M1045.44 150.40H1055.04M1050.24 150.70L1046.54 156.00M1050.24 150.70L1053.94 156.00M1063.39 146.10V150.80M1058.59 150.40H1068.19M1063.39 150.70L1059.69 156.00M1063.39 150.70L1067.09 156.00M1076.55 146.10V150.80M1071.75 150.40H1081.35M1076.55 150.70L1072.85 156.00M1076.55 150.70L1080.25 156.00M1089.71 146.10V150.80M1084.91 150.40H1094.51M1089.71 150.70L1086.01 156.00M1089.71 150.70L1093.41 156.00M1102.87 146.10V150.80M1098.07 150.40H1107.67M1102.87 150.70L1099.17 156.00M1102.87 150.70L1106.57 156.00M1116.03 146.10V150.80M1111.23 150.40H1120.83M1116.03 150.70L1112.33 156.00M1116.03 150.70L1119.73 156.00M1129.18 146.10V150.80M1124.38 150.40H1133.98M1129.18 150.70L1125.48 156.00M1129.18 150.70L1132.88 156.00M1142.34 146.10V150.80M1137.54 150.40H1147.14M1142.34 150.70L1138.64 156.00M1142.34 150.70L1146.04 156.00M1155.50 146.10V150.80M1150.70 150.40H1160.30M1155.50 150.70L1151.80 156.00M1155.50 150.70L1159.20 156.00M1168.66 146.10V150.80M1163.86 150.40H1173.46M1168.66 150.70L1164.96 156.00M1168.66 150.70L1172.36 156.00M1181.82 146.10V150.80M1177.02 150.40H1186.62M1181.82 150.70L1178.12 156.00M1181.82 150.70L1185.52 156.00M1194.97 146.10V150.80M1190.17 150.40H1199.77M1194.97 150.70L1191.27 156.00M1194.97 150.70L1198.67 156.00M1208.13 146.10V150.80M1203.33 150.40H1212.93M1208.13 150.70L1204.43 156.00M1208.13 150.70L1211.83 156.00M1221.29 146.10V150.80M1216.49 150.40H1226.09M1221.29 150.70L1217.59 156.00M1221.29 150.70L1224.99 156.00M1234.45 146.10V150.80M1229.65 150.40H1239.25M1234.45 150.70L1230.75 156.00M1234.45 150.70L1238.15 156.00M1247.61 146.10V150.80M1242.81 150.40H1252.41M1247.61 150.70L1243.91 156.00M1247.61 150.70L1251.31 156.00M1260.76 146.10V150.80M1255.96 150.40H1265.56M1260.76 150.70L1257.06 156.00M1260.76 150.70L1264.46 156.00M1273.92 146.10V150.80M1269.12 150.40H1278.72M1273.92 150.70L1270.22 156.00M1273.92 150.70L1277.62 156.00M1287.08 146.10V150.80M1282.28 150.40H1291.88M1287.08 150.70L1283.38 156.00M1287.08 150.70L1290.78 156.00M1300.24 146.10V150.80M1295.44 150.40H1305.04M1300.24 150.70L1296.54 156.00M1300.24 150.70L1303.94 156.00M1313.40 146.10V150.80M1308.60 150.40H1318.20M1313.40 150.70L1309.70 156.00M1313.40 150.70L1317.10 156.00M1326.55 146.10V150.80M1321.75 150.40H1331.35M1326.55 150.70L1322.85 156.00M1326.55 150.70L1330.25 156.00M1339.71 146.10V150.80M1334.91 150.40H1344.51M1339.71 150.70L1336.01 156.00M1339.71 150.70L1343.41 156.00M1352.87 146.10V150.80M1348.07 150.40H1357.67M1352.87 150.70L1349.17 156.00M1352.87 150.70L1356.57 156.00M1366.03 146.10V150.80M1361.23 150.40H1370.83M1366.03 150.70L1362.33 156.00M1366.03 150.70L1369.73 156.00M1379.19 146.10V150.80M1374.39 150.40H1383.99M1379.19 150.70L1375.49 156.00M1379.19 150.70L1382.89 156.00M1392.34 146.10V150.80M1387.54 150.40H1397.14M1392.34 150.70L1388.64 156.00M1392.34 150.70L1396.04 156.00M1405.50 146.10V150.80M1400.70 150.40H1410.30M1405.50 150.70L1401.80 156.00M1405.50 150.70L1409.20 156.00M1418.66 146.10V150.80M1413.86 150.40H1423.46M1418.66 150.70L1414.96 156.00M1418.66 150.70L1422.36 156.00M1431.82 146.10V150.80M1427.02 150.40H1436.62M1431.82 150.70L1428.12 156.00M1431.82 150.70L1435.52 156.00M1444.98 146.10V150.80M1440.18 150.40H1449.78M1444.98 150.70L1441.28 156.00M1444.98 150.70L1448.68 156.00M1458.13 146.10V150.80M1453.33 150.40H1462.93M1458.13 150.70L1454.43 156.00M1458.13 150.70L1461.83 156.00M1471.29 146.10V150.80M1466.49 150.40H1476.09M1471.29 150.70L1467.59 156.00M1471.29 150.70L1474.99 156.00M1484.45 146.10V150.80M1479.65 150.40H1489.25M1484.45 150.70L1480.75 156.00M1484.45 150.70L1488.15 156.00M1497.61 146.10V150.80M1492.81 150.40H1502.41M1497.61 150.70L1493.91 156.00M1497.61 150.70L1501.31 156.00M1510.77 146.10V150.80M1505.97 150.40H1515.57M1510.77 150.70L1507.07 156.00M1510.77 150.70L1514.47 156.00M1523.92 146.10V150.80M1519.12 150.40H1528.72M1523.92 150.70L1520.22 156.00M1523.92 150.70L1527.62 156.00M1537.08 146.10V150.80M1532.28 150.40H1541.88M1537.08 150.70L1533.38 156.00M1537.08 150.70L1540.78 156.00M1550.24 146.10V150.80M1545.44 150.40H1555.04M1550.24 150.70L1546.54 156.00M1550.24 150.70L1553.94 156.00M1563.40 146.10V150.80M1558.60 150.40H1568.20M1563.40 150.70L1559.70 156.00M1563.40 150.70L1567.10 156.00M1576.56 146.10V150.80M1571.76 150.40H1581.36M1576.56 150.70L1572.86 156.00M1576.56 150.70L1580.26 156.00M1589.71 146.10V150.80M1584.91 150.40H1594.51M1589.71 150.70L1586.01 156.00M1589.71 150.70L1593.41 156.00M1602.87 146.10V150.80M1598.07 150.40H1607.67M1602.87 150.70L1599.17 156.00M1602.87 150.70L1606.57 156.00M1616.03 146.10V150.80M1611.23 150.40H1620.83M1616.03 150.70L1612.33 156.00M1616.03 150.70L1619.73 156.00M1629.19 146.10V150.80M1624.39 150.40H1633.99M1629.19 150.70L1625.49 156.00M1629.19 150.70L1632.89 156.00M1642.35 146.10V150.80M1637.55 150.40H1647.15M1642.35 150.70L1638.65 156.00M1642.35 150.70L1646.05 156.00M1655.50 146.10V150.80M1650.70 150.40H1660.30M1655.50 150.70L1651.80 156.00M1655.50 150.70L1659.20 156.00M1668.66 146.10V150.80M1663.86 150.40H1673.46M1668.66 150.70L1664.96 156.00M1668.66 150.70L1672.36 156.00M1681.82 146.10V150.80M1677.02 150.40H1686.62M1681.82 150.70L1678.12 156.00M1681.82 150.70L1685.52 156.00M1694.98 146.10V150.80M1690.18 150.40H1699.78M1694.98 150.70L1691.28 156.00M1694.98 150.70L1698.68 156.00M1708.14 146.10V150.80M1703.34 150.40H1712.94M1708.14 150.70L1704.44 156.00M1708.14 150.70L1711.84 156.00M1721.29 146.10V150.80M1716.49 150.40H1726.09M1721.29 150.70L1717.59 156.00M1721.29 150.70L1724.99 156.00M1734.45 146.10V150.80M1729.65 150.40H1739.25M1734.45 150.70L1730.75 156.00M1734.45 150.70L1738.15 156.00M1747.61 146.10V150.80M1742.81 150.40H1752.41M1747.61 150.70L1743.91 156.00M1747.61 150.70L1751.31 156.00M1760.77 146.10V150.80M1755.97 150.40H1765.57M1760.77 150.70L1757.07 156.00M1760.77 150.70L1764.47 156.00M1773.93 146.10V150.80M1769.13 150.40H1778.73M1773.93 150.70L1770.23 156.00M1773.93 150.70L1777.63 156.00M1787.08 146.10V150.80M1782.28 150.40H1791.88M1787.08 150.70L1783.38 156.00M1787.08 150.70L1790.78 156.00M1800.24 146.10V150.80M1795.44 150.40H1805.04M1800.24 150.70L1796.54 156.00M1800.24 150.70L1803.94 156.00M1813.40 146.10V150.80M1808.60 150.40H1818.20M1813.40 150.70L1809.70 156.00M1813.40 150.70L1817.10 156.00M1826.56 146.10V150.80M1821.76 150.40H1831.36M1826.56 150.70L1822.86 156.00M1826.56 150.70L1830.26 156.00" stroke="#008000" stroke-width="1.35" fill="none"/></svg>
<div class="a" style="left:1858px;top:136.5px;width:107px;height:25px;background:transparent;border:2px solid #000;border-radius:6px"></div>
<svg class="a " style="left:1880px;top:151px" width="34" height="8" viewBox="0 0 34 8"><circle cx="4.2" cy="4.1" r="1.75"/><circle cx="17.3" cy="4.1" r="1.75"/><circle cx="30.6" cy="4.1" r="1.75"/></svg>
<div class="c" style="top:142.83px;left:1930px;transform:scaleY(1.12)">/</div>
<svg class="a" style="left:0;top:0" width="2107" height="968"><path d="M1923.40 146.30V151.00M1918.60 150.60H1928.20M1923.40 150.90L1919.70 156.20M1923.40 150.90L1927.10 156.20" stroke="#000" stroke-width="1.8" fill="none"/></svg>
<svg class="a" style="left:0;top:0" width="2107" height="968"><path d="M1168.66 958.10V962.80M1163.86 962.40H1173.46M1168.66 962.70L1164.96 968.00M1168.66 962.70L1172.36 968.00M1708.14 958.10V962.80M1703.34 962.40H1712.94M1708.14 962.70L1704.44 968.00M1708.14 962.70L1711.84 968.00M1931.82 958.10V962.80M1927.02 962.40H1936.62M1931.82 962.70L1928.12 968.00M1931.82 962.70L1935.52 968.00" stroke="#000" stroke-width="1.5" fill="none"/></svg>
<svg class="a " style="left:790.5px;top:140px" width="9" height="15" viewBox="0 0 9 15"><path d="M0.5 0.3V14L8.3 7.1Z" fill="#5a5a5a"/></svg>
<svg class="a " style="left:788px;top:311px" width="15" height="9" viewBox="0 0 15 9"><path d="M0.5 0.5H14.5L7.5 8Z" fill="#5a5a5a"/></svg>
<svg class="a " style="left:788px;top:619px" width="15" height="9" viewBox="0 0 15 9"><path d="M0.5 0.5H14.5L7.5 8Z" fill="#5a5a5a"/></svg>
<svg class="a " style="left:788px;top:759px" width="15" height="9" viewBox="0 0 15 9"><path d="M0.5 0.5H14.5L7.5 8Z" fill="#5a5a5a"/></svg>
<svg class="a " style="left:788px;top:955px" width="15" height="9" viewBox="0 0 15 9"><path d="M0.5 0.5H14.5L7.5 8Z" fill="#5a5a5a"/></svg>
</body></html>
